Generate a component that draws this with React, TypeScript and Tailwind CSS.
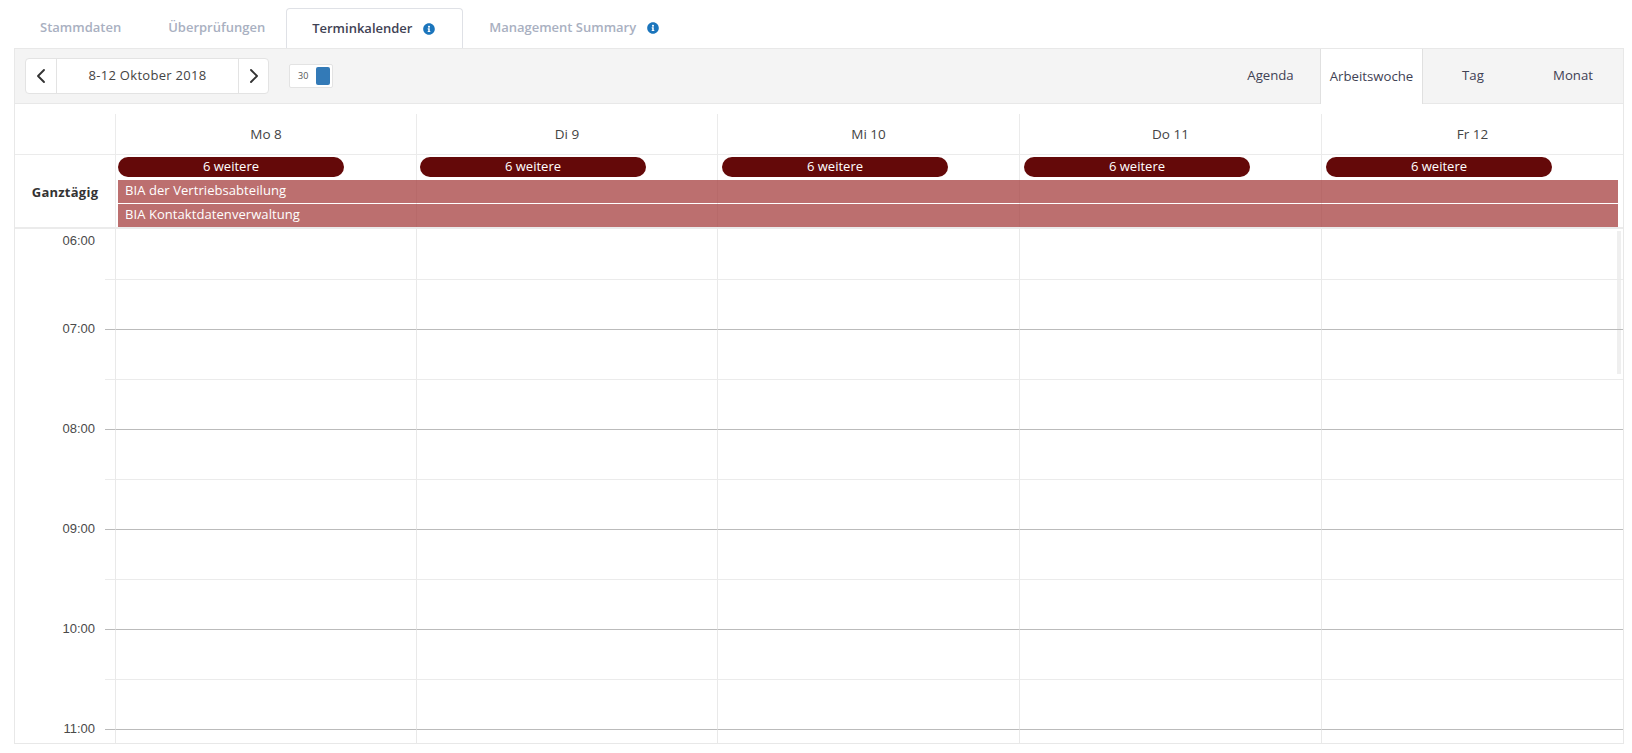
import { FaInfoCircle } from "react-icons/fa";
import { ChevronLeft, ChevronRight } from "lucide-react";

const days = [
  { label: "Mo 8", w: "w-[301px]" },
  { label: "Di 9", w: "w-[301px]" },
  { label: "Mi 10", w: "w-[302px]" },
  { label: "Do 11", w: "w-[302px]" },
  { label: "Fr 12", w: "flex-1" },
];

const slots = [
  { time: "", major: false, h: "h-[51px]" },
  { time: "07:00", major: true, h: "h-[50px]" },
  { time: "", major: false, h: "h-[50px]" },
  { time: "08:00", major: true, h: "h-[50px]" },
  { time: "", major: false, h: "h-[50px]" },
  { time: "09:00", major: true, h: "h-[50px]" },
  { time: "", major: false, h: "h-[50px]" },
  { time: "10:00", major: true, h: "h-[50px]" },
  { time: "", major: false, h: "h-[50px]" },
  { time: "11:00", major: true, h: "h-[50px]" },
  { time: "", major: false, h: "h-[50px]" },
];

function Info() {
  return <FaInfoCircle className="text-[#1b75bc] ml-[11px] w-[12px] h-[12px]" />;
}

function Slot({ major, time, h, first }: { major: boolean; time: string; h: string; first: boolean }) {
  const line = major ? "border-b-[#bbbbbb]" : "border-b-[#ebebeb]";
  return (
    <div className={`flex ${h} shrink-0`}>
      <div className="w-[90px] relative">
        {first && (
          <span className="absolute right-[10px] top-[4px] text-[13px] leading-[16px] text-[#4a4a4a] font-['Liberation_Sans',sans-serif]">
            06:00
          </span>
        )}
        {time && (
          <span className="absolute right-[10px] bottom-[-7px] text-[13px] leading-[16px] text-[#4a4a4a] font-['Liberation_Sans',sans-serif]">
            {time}
          </span>
        )}
      </div>
      <div className={`w-[10px] border-b ${line}`} />
      {days.map((d) => (
        <div key={d.label} className={`${d.w} border-l border-l-[#e9e9e9] border-b ${line}`} />
      ))}
    </div>
  );
}

export default function App() {
  return (
    <div className="w-[1632px] h-[753px] bg-white overflow-hidden font-['Open_Sans',sans-serif] text-[#3f4254]">
      <div className="pl-[14px] pr-[8px] pt-[8px]">
        <div className="flex h-[40px] text-[13px] font-semibold text-[#a9b0c1]">
          <div className="pl-[26px] pr-[24px] flex items-center">Stammdaten</div>
          <div className="pl-[23px] pr-[21px] flex items-center">Überprüfungen</div>
          <div className="px-[25px] flex items-center bg-white border border-b-0 border-[#dfe1e6] rounded-t-[4px] text-[#3f4254] w-[177px]">
            Terminkalender
            <Info />
          </div>
          <div className="pl-[26px] flex items-center">
            Management Summary
            <Info />
          </div>
        </div>

        <div className="border border-[#e8e8e8] h-[696px] w-[1610px] flex flex-col overflow-hidden">
          <div className="flex items-stretch h-[56px] shrink-0 bg-[#f4f4f4] border-b border-[#e8e8e8] -mt-[1px] border-t">
            <div className="flex items-center pl-[10px] flex-1">
              <div className="flex items-stretch h-[36px] w-[244px] bg-white border border-[#e3e3e3] rounded-[4px]">
                <div className="w-[31px] flex items-center justify-center border-r border-[#e3e3e3]">
                  <ChevronLeft size={24} strokeWidth={1.9} className="text-[#333]" />
                </div>
                <div className="flex-1 flex items-center justify-center text-[13px] tracking-[0.3px] text-[#444]">
                  8-12 Oktober 2018
                </div>
                <div className="w-[30px] flex items-center justify-center border-l border-[#e3e3e3]">
                  <ChevronRight size={24} strokeWidth={1.9} className="text-[#333]" />
                </div>
              </div>
              <div className="ml-[20px] w-[44px] h-[24px] bg-white border border-[#e3e3e3] rounded-[2px] flex items-center justify-between pl-[8px] pr-[2px]">
                <span className="text-[9px] text-[#555]">30</span>
                <span className="w-[14px] h-[18px] bg-[#337ab7] rounded-[2px]" />
              </div>
            </div>
            <div className="flex text-[13.2px] text-[#3f4254]">
              <div className="w-[101px] flex items-center justify-center pl-[2px]">Agenda</div>
              <div className="w-[103px] flex items-center justify-center bg-white border-x border-[#e0e0e0] -mb-[1px]">
                Arbeitswoche
              </div>
              <div className="w-[100px] flex items-center justify-center">Tag</div>
              <div className="w-[100px] flex items-center justify-center">Monat</div>
            </div>
          </div>

          <div className="flex h-[51px] shrink-0 border-b border-[#ebebeb] pt-[10px]">
            <div className="w-[100px]" />
            {days.map((d) => (
              <div
                key={d.label}
                className={`${d.w} border-l border-[#ebebeb] flex items-center justify-center text-[13.5px] text-[#444]`}
              >
                {d.label}
              </div>
            ))}
          </div>

          <div className="flex h-[74px] shrink-0 border-b-2 border-[#ebebeb]">
            <div className="w-[100px] shrink-0 flex items-center justify-center text-[13px] font-bold tracking-[0.25px] text-[#333] pt-[3px]">
              Ganztägig
            </div>
            <div className="flex-1 min-w-0 relative">
              <div className="absolute inset-0 flex">
                {days.map((d) => (
                  <div key={d.label} className={`${d.w} border-l border-[#ebebeb]`} />
                ))}
              </div>
              <div className="relative flex pt-[2px]">
                {days.map((d) => (
                  <div key={d.label} className="w-[302px] shrink-0 pl-[3px]">
                    <div className="w-[226px] h-[20px] rounded-[10px] bg-[#640909] text-white text-[13px] leading-[19px] text-center">
                      6 weitere
                    </div>
                  </div>
                ))}
              </div>
              <div className="relative pl-[3px] pr-[5px] pt-[3px] flex flex-col gap-[1px]">
                <div className="h-[23px] bg-[#a53f3f]/75 text-white text-[13px] tracking-[0.07px] leading-[21px] pl-[7px]">
                  BIA der Vertriebsabteilung
                </div>
                <div className="h-[23px] bg-[#a53f3f]/75 text-white text-[13px] tracking-[0.07px] leading-[21px] pl-[7px]">
                  BIA Kontaktdatenverwaltung
                </div>
              </div>
            </div>
          </div>

          <div className="relative flex-1 overflow-hidden">
            <div className="absolute right-[2px] top-[2px] w-[4px] h-[143px] bg-[#efefef]" />
            <div className="relative flex flex-col">
              {slots.map((s, i) => (
                <Slot key={i} time={s.time} major={s.major} h={s.h} first={i === 0} />
              ))}
            </div>
          </div>
        </div>
      </div>
    </div>
  );
}
